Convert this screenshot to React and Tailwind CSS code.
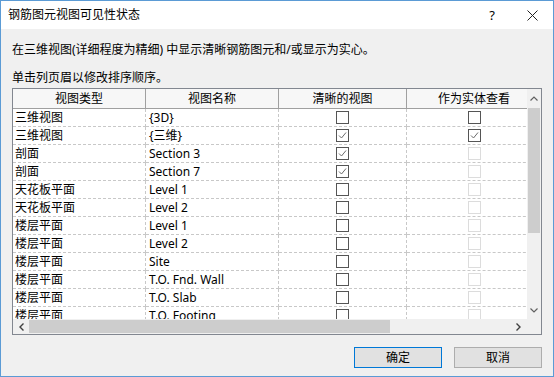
import React from "react";

const rows = [
  { type: "三维视图", name: "{3D}", clear: false, solid: false, solidOn: true },
  { type: "三维视图", name: "{三维}", clear: true, solid: true, solidOn: true },
  { type: "剖面", name: "Section 3", clear: true, solid: false, solidOn: false },
  { type: "剖面", name: "Section 7", clear: true, solid: false, solidOn: false },
  { type: "天花板平面", name: "Level 1", clear: false, solid: false, solidOn: false },
  { type: "天花板平面", name: "Level 2", clear: false, solid: false, solidOn: false },
  { type: "楼层平面", name: "Level 1", clear: false, solid: false, solidOn: false },
  { type: "楼层平面", name: "Level 2", clear: false, solid: false, solidOn: false },
  { type: "楼层平面", name: "Site", clear: false, solid: false, solidOn: false },
  { type: "楼层平面", name: "T.O. Fnd. Wall", clear: false, solid: false, solidOn: false },
  { type: "楼层平面", name: "T.O. Slab", clear: false, solid: false, solidOn: false },
  { type: "楼层平面", name: "T.O. Footing", clear: false, solid: false, solidOn: false },
];

function Check({ checked, enabled }) {
  return (
    <div
      className={
        "flex h-[13px] w-[13px] items-center justify-center border bg-white " +
        (enabled ? "border-[#555555]" : "border-[#dcdcdc]")
      }
    >
      {checked && (
        <svg width="9" height="9" viewBox="0 0 9 9">
          <polyline points="1,4.5 3.5,7 8,1.5" fill="none" stroke="#6b6b6b" strokeWidth="1" />
        </svg>
      )}
    </div>
  );
}

const cell = "flex h-[18px] items-center border-b border-dashed border-[#c8c8c8]";

export default function App() {
  return (
    <div
      className="flex h-[377px] w-[554px] flex-col border border-[#5b9bd5] bg-[#f0f0f0] text-[12px] text-black"
      style={{ fontFamily: '"Noto Sans", "Noto Sans CJK SC", sans-serif' }}
    >
      <div className="flex h-[28px] shrink-0 items-center bg-white pl-[7px] pr-[15px]">
        <span className="leading-none">钢筋图元视图可见性状态</span>
        <span className="ml-auto mr-[32px] text-[13px] leading-none">?</span>
        <svg width="11" height="11" viewBox="0 0 11 11">
          <path d="M0.5 0.5 L10.5 10.5 M10.5 0.5 L0.5 10.5" stroke="#222" strokeWidth="1" />
        </svg>
      </div>

      <div className="flex flex-1 flex-col px-[11px]">
        <p className="mt-[13px] leading-[16px]">在三维视图(详细程度为精细) 中显示清晰钢筋图元和/或显示为实心。</p>
        <p className="mt-[12px] leading-[16px]">单击列页眉以修改排序顺序。</p>

        <div className="mt-[2px] flex w-[530px] flex-col border border-[#828790] bg-white">
          <div className="flex h-[230px]">
            <div className="w-[515px] overflow-hidden">
              <div className="w-[528px]">
                <div className="flex h-[20px] border-b border-[#a0a0a0] bg-[#f7f7f7]">
                  <div className="flex w-[133px] items-center justify-center border-r border-[#a0a0a0]">视图类型</div>
                  <div className="flex w-[133px] items-center justify-center border-r border-[#a0a0a0]">视图名称</div>
                  <div className="flex w-[128px] items-center justify-center border-r border-[#a0a0a0]">清晰的视图</div>
                  <div className="flex w-[134px] items-center justify-center">作为实体查看</div>
                </div>
                <div className="h-[210px] overflow-hidden">
                  {rows.map((r, i) => (
                    <div key={i} className="flex">
                      <div className={cell + " w-[133px] border-r pl-[2px]"}>{r.type}</div>
                      <div className={cell + " w-[133px] border-r pl-[3px]"}>{r.name}</div>
                      <div className={cell + " w-[128px] justify-center border-r"}>
                        <Check checked={r.clear} enabled />
                      </div>
                      <div className={cell + " w-[134px] justify-center"}>
                        <Check checked={r.solid} enabled={r.solidOn} />
                      </div>
                    </div>
                  ))}
                </div>
              </div>
            </div>
            <div className="flex w-[14px] flex-col bg-[#f0f0f0]">
              <div className="flex h-[19px] items-center justify-center">
                <svg width="8" height="5" viewBox="0 0 8 5">
                  <polyline points="0.5,4.5 4,1 7.5,4.5" fill="none" stroke="#606060" strokeWidth="1.2" />
                </svg>
              </div>
              <div className="mx-[1px] h-[125px] bg-[#cdcdcd]" />
              <div className="flex-1" />
              <div className="flex h-[18px] items-center justify-center">
                <svg width="8" height="5" viewBox="0 0 8 5">
                  <polyline points="0.5,0.5 4,4 7.5,0.5" fill="none" stroke="#606060" strokeWidth="1.2" />
                </svg>
              </div>
            </div>
          </div>
          <div className="flex h-[15px] bg-[#f0f0f0]">
            <div className="flex w-[16px] items-center justify-center">
              <svg width="5" height="8" viewBox="0 0 5 8">
                <polyline points="4.5,0.5 1,4 4.5,7.5" fill="none" stroke="#404040" strokeWidth="1.4" />
              </svg>
            </div>
            <div className="my-[1px] w-[361px] bg-[#cdcdcd]" />
            <div className="flex-1" />
            <div className="flex w-[18px] items-center justify-center">
              <svg width="5" height="8" viewBox="0 0 5 8">
                <polyline points="0.5,0.5 4,4 0.5,7.5" fill="none" stroke="#404040" strokeWidth="1.4" />
              </svg>
            </div>
            <div className="w-[14px]" />
          </div>
        </div>

        <div className="mt-[12px] flex justify-end gap-[12px] pr-[0px]">
          <button className="flex h-[21px] w-[88px] items-center justify-center border border-[#0078d7] bg-[#e1e1e1] leading-none">确定</button>
          <button className="flex h-[21px] w-[88px] items-center justify-center border border-[#adadad] bg-[#e1e1e1] leading-none">取消</button>
        </div>
      </div>
    </div>
  );
}
